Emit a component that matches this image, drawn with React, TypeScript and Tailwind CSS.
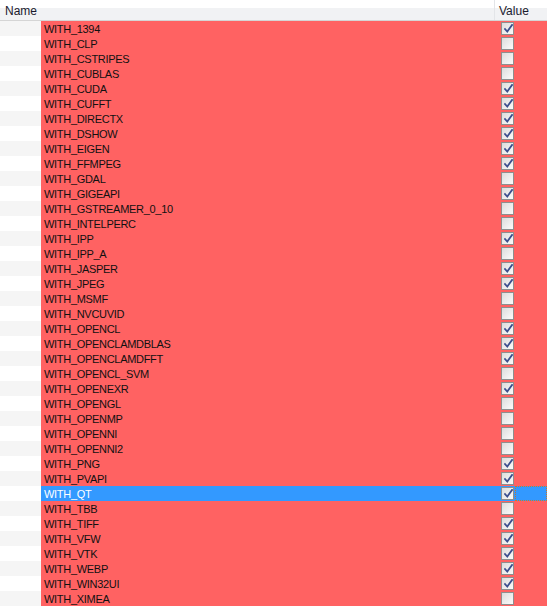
const rows: [string, boolean][] = [
  ["WITH_1394", true],
  ["WITH_CLP", false],
  ["WITH_CSTRIPES", false],
  ["WITH_CUBLAS", false],
  ["WITH_CUDA", true],
  ["WITH_CUFFT", true],
  ["WITH_DIRECTX", true],
  ["WITH_DSHOW", true],
  ["WITH_EIGEN", true],
  ["WITH_FFMPEG", true],
  ["WITH_GDAL", false],
  ["WITH_GIGEAPI", true],
  ["WITH_GSTREAMER_0_10", false],
  ["WITH_INTELPERC", false],
  ["WITH_IPP", true],
  ["WITH_IPP_A", false],
  ["WITH_JASPER", true],
  ["WITH_JPEG", true],
  ["WITH_MSMF", false],
  ["WITH_NVCUVID", false],
  ["WITH_OPENCL", true],
  ["WITH_OPENCLAMDBLAS", true],
  ["WITH_OPENCLAMDFFT", true],
  ["WITH_OPENCL_SVM", false],
  ["WITH_OPENEXR", true],
  ["WITH_OPENGL", false],
  ["WITH_OPENMP", false],
  ["WITH_OPENNI", false],
  ["WITH_OPENNI2", false],
  ["WITH_PNG", true],
  ["WITH_PVAPI", true],
  ["WITH_QT", true],
  ["WITH_TBB", false],
  ["WITH_TIFF", true],
  ["WITH_VFW", true],
  ["WITH_VTK", true],
  ["WITH_WEBP", true],
  ["WITH_WIN32UI", true],
  ["WITH_XIMEA", false],
];

const Checkbox = ({ checked }: { checked: boolean }) => (
  <span className="relative flex h-[13px] w-[13px] items-center justify-center border border-[#8e8f8f] bg-gradient-to-br from-[#dcdcdc] to-[#fbfbfb]">
    {checked && (
      <svg width="9" height="9" viewBox="0 0 9 9" className="absolute left-[2px] top-[1px]">
        <path d="M1 5 L3.3 7.5 L8 1" fill="none" stroke="#3c4f8f" strokeWidth="1.8" strokeLinecap="square" />
      </svg>
    )}
  </span>
);

const App = (): JSX.Element => {
  return (
    <div className="h-[606px] w-[547px] overflow-hidden bg-white font-['Liberation_Sans',Arial,sans-serif] text-[11px] tracking-[-0.3px] text-black">
      {/* header */}
      <div className="flex h-[21px] flex-col border-b border-[#d5d5d5]">
        <div className="h-[8px] bg-white" />
        <div className="flex-1 bg-[#f1f2f4]" />
        <div className="-mt-[20px] flex h-[20px] text-[12px] tracking-normal text-[#1a1a2e]">
          <div className="flex w-[495px] items-center border-r border-[#e3e5e8] pl-[5px] pt-[1px] leading-none">Name</div>
          <div className="flex flex-1 items-center pl-[4px] pt-[1px] leading-none">Value</div>
        </div>
      </div>
      {rows.map(([name, checked], i) => {
        const selected = name === "WITH_QT";
        return (
          <div key={name} className="flex h-[15px]">
            <div className={"w-[41px] " + (i % 2 === 0 ? "bg-[#f5f5f5]" : "bg-white")} />
            <div
              className={
                "flex w-[454px] items-center pl-[3px] pt-[1px] leading-[14px] " +
                (selected ? "bg-[#3399ff] text-white" : "bg-[#ff6262] text-[#111]")
              }
            >
              {name}
            </div>
            <div className={"flex flex-1 items-center " + (selected ? "bg-[#3399ff]" : "bg-[#ff6262]")}>
              <div className="ml-[6px]">
                <Checkbox checked={checked} />
              </div>
              {selected && <div className="ml-[1px] h-[15px] flex-1 border border-dotted border-[#c8782a]" />}
            </div>
          </div>
        );
      })}
    </div>
  );
};

export default App;
